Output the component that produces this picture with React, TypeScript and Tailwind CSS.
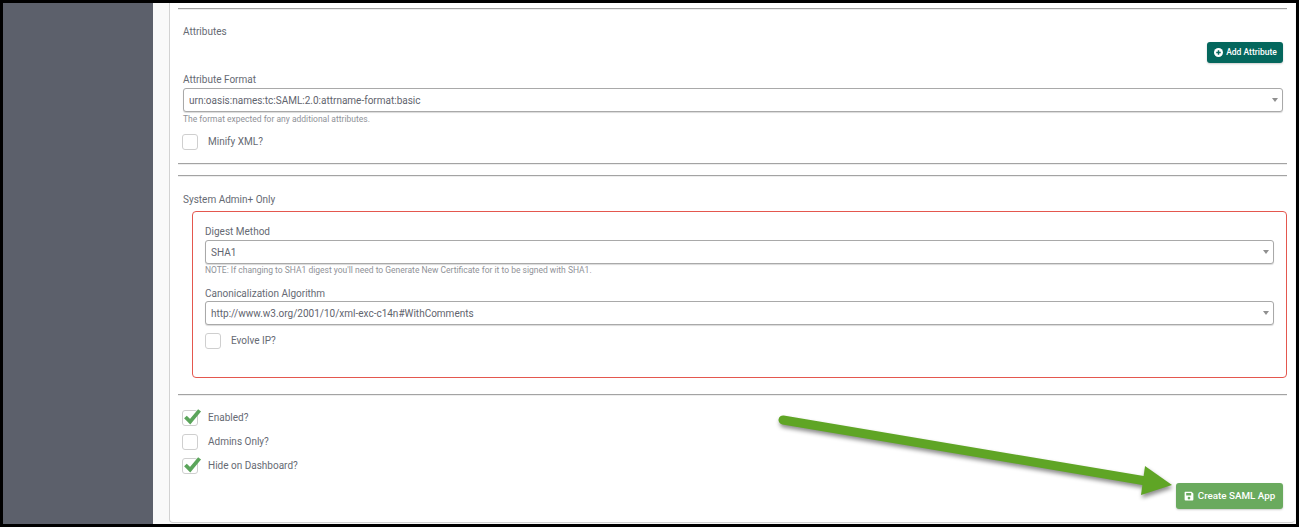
const font = "[font-family:Roboto,'Liberation_Sans',sans-serif]";

function Rule({ className = "" }: { className?: string }) {
  return <div className={`h-[2px] border-t border-[#a3a3a3] bg-[#eeeeee] ${className}`} />;
}

function Caret() {
  return <span className="ml-auto mr-[4px] h-0 w-0 border-x-[3px] border-t-[4px] border-x-transparent border-t-[#8f8f8f]" />;
}

function Select({ value, className = "" }: { value: string; className?: string }) {
  return (
    <div className={`flex h-[24px] items-center rounded-[3px] border border-[#a9a9a9] bg-white pl-[5px] text-[10px] text-[#5f646e] shadow-[0_1px_1px_rgba(0,0,0,0.15)] ${className}`}>
      <span>{value}</span>
      <Caret />
    </div>
  );
}

function Check({ label, checked = false, className = "" }: { label: string; checked?: boolean; className?: string }) {
  return (
    <div className={`flex h-[16px] items-center ${className}`}>
      <span className="relative block h-[16px] w-[16px] rounded-[3px] border border-[#cfcfcf] bg-white">
        {checked && (
          <svg viewBox="0 0 20 18" className="absolute left-[0px] top-[-3px] h-[17px] w-[19px]">
            <path d="M2.5 9.5 L7.5 14.5 L17.5 2.5" fill="none" stroke="#5ba55b" strokeWidth="4" />
          </svg>
        )}
      </span>
      <span className="ml-[10px] pb-[2px] text-[10px] text-[#666a73]">{label}</span>
    </div>
  );
}

export default function App() {
  return (
    <div className={`relative flex h-[527px] w-[1299px] overflow-hidden border-x-[3px] border-b-[3px] border-t-[3px] border-black bg-[#f9f9f9] ${font}`}>
      <aside className="w-[150px] shrink-0 bg-[#5c606b]" />
      <main className="ml-[16px] mb-[1px] w-[1126px] rounded-br-[4px] rounded-bl-[4px] border-b border-l border-[#d2d2d2] bg-white px-[8px] pt-[5px]">
        <Rule />
        <div className="pl-[5px]">
          <div className="mt-[15px] text-[10px] leading-[13px] text-[#666a73]">Attributes</div>
          <div className="mr-[4px] mt-[4px] flex justify-end">
            <button className="flex h-[21px] w-[76px] items-center justify-center gap-[3px] rounded-[3px] bg-[#04675d] pl-[1px] text-[8.5px] font-medium text-white shadow-[0_1px_2px_rgba(0,0,0,0.2)]">
              <svg viewBox="0 0 16 16" className="h-[9px] w-[9px]">
                <circle cx="8" cy="8" r="8" fill="#ffffff" />
                <path d="M8 4v8M4 8h8" stroke="#04675d" strokeWidth="2.6" />
              </svg>
              Add Attribute
            </button>
          </div>
          <div className="mr-[4px] mt-[10px] text-[10px] leading-[13px] text-[#666a73]">Attribute Format</div>
          <Select value="urn:oasis:names:tc:SAML:2.0:attrname-format:basic" className="mr-[4px] mt-[2px]" />
          <div className="mt-[1px] text-[8.5px] leading-[12px] text-[#8f9298]">The format expected for any additional attributes.</div>
          <Check label="Minify XML?" className="-ml-[1px] mt-[9px]" />
        </div>
        <Rule className="mt-[13px]" />
        <Rule className="mt-[10px]" />
        <div className="ml-[5px] mt-[16px] text-[10px] leading-[13px] text-[#666a73]">System Admin+ Only</div>
        <section className="ml-[14px] mt-[5px] h-[167px] rounded-[4px] border border-[#e4574e] px-[12px] pt-[13px]">
          <div className="text-[10px] leading-[13px] text-[#666a73]">Digest Method</div>
          <Select value="SHA1" className="mt-[2px]" />
          <div className="mt-[0px] text-[8.5px] leading-[12px] text-[#8f9298]">NOTE: If changing to SHA1 digest you'll need to Generate New Certificate for it to be signed with SHA1.</div>
          <div className="mt-[11px] text-[10px] leading-[13px] text-[#666a73]">Canonicalization Algorithm</div>
          <Select value="http://www.w3.org/2001/10/xml-exc-c14n#WithComments" className="mt-[1px]" />
          <Check label="Evolve IP?" className="mt-[8px]" />
        </section>
        <Rule className="mt-[16px]" />
        <div className="ml-[4px] mt-[14px] flex flex-col gap-[8px]">
          <Check label="Enabled?" checked />
          <Check label="Admins Only?" />
          <Check label="Hide on Dashboard?" checked />
        </div>
        <div className="mr-[4px] mt-[9px] flex justify-end">
          <button className="flex h-[26px] w-[107px] items-center justify-center gap-[4px] rounded-[3px] bg-[#6aaa5e] text-[9.8px] font-medium text-white shadow-[0_1px_2px_rgba(0,0,0,0.2)]">
            <svg viewBox="0 0 16 16" className="h-[10px] w-[10px]">
              <path fillRule="evenodd" fill="#ffffff" d="M2 1h10l3 3v9.5A1.5 1.5 0 0 1 13.500 15h-11A1.500 1.500 0 0 1 1 13.500v-11A1.500 1.500 0 0 1 2 1Zm1.500 2v4h8V3h-8ZM8 9a2.200 2.200 0 1 0 0 4.400A2.200 2.200 0 0 0 8 9Z" />
            </svg>
            Create SAML App
          </button>
        </div>
      </main>
      <svg className="pointer-events-none absolute left-[-3px] top-[-3px] h-[527px] w-[1299px] drop-shadow-[1px_3px_2px_rgba(0,0,0,0.45)]" viewBox="0 0 1299 527">
        <path d="M783 420 L1146 481" fill="none" stroke="#5fa525" strokeWidth="9" strokeLinecap="round" />
        <path d="M1145 466 L1172 485 L1141 495 Z" fill="#5fa525" />
      </svg>
    </div>
  );
}
